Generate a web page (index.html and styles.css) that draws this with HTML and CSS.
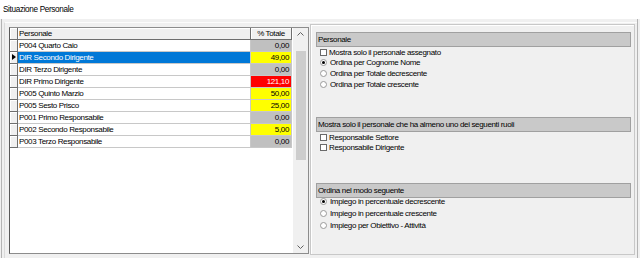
FILE: index.html
```html
<!DOCTYPE html>
<html>
<head>
<meta charset="utf-8">
<link rel="stylesheet" href="styles.css">
</head>
<body>
<div class="window">
  <div class="titlebar">Situazione Personale</div>
  <div class="client">
    <div class="frame">
      <div class="form">
        <div class="grid">
          <div class="table">
            <div class="row head">
              <div class="ind"></div><div class="name">Personale</div><div class="pct">% Totale</div>
            </div>
            <div class="row"><div class="ind"></div><div class="name">P004 Quarto Caio</div><div class="pct gray">0,00</div></div>
            <div class="row sel"><div class="ind"><span class="tri"></span></div><div class="name">DIR Secondo Dirigente</div><div class="pct yellow">49,00</div></div>
            <div class="row"><div class="ind"></div><div class="name">DIR Terzo Dirigente</div><div class="pct gray">0,00</div></div>
            <div class="row"><div class="ind"></div><div class="name">DIR Primo Dirigente</div><div class="pct red">121,10</div></div>
            <div class="row"><div class="ind"></div><div class="name">P005 Quinto Marzio</div><div class="pct yellow">50,00</div></div>
            <div class="row"><div class="ind"></div><div class="name">P005 Sesto Prisco</div><div class="pct yellow">25,00</div></div>
            <div class="row"><div class="ind"></div><div class="name">P001 Primo Responsabile</div><div class="pct gray">0,00</div></div>
            <div class="row"><div class="ind"></div><div class="name">P002 Secondo Responsabile</div><div class="pct yellow">5,00</div></div>
            <div class="row"><div class="ind"></div><div class="name">P003 Terzo Responsabile</div><div class="pct gray">0,00</div></div>
          </div>
          <div class="vscroll">
            <div class="sbtn"><svg width="7" height="4" viewBox="0 0 7 4"><polyline points="0.5,3.5 3.5,0.5 6.5,3.5" fill="none" stroke="#606060" stroke-width="1"/></svg></div>
            <div class="track"><div class="thumb"></div></div>
            <div class="sbtn"><svg width="7" height="4" viewBox="0 0 7 4"><polyline points="0.5,0.5 3.5,3.5 6.5,0.5" fill="none" stroke="#606060" stroke-width="1"/></svg></div>
          </div>
        </div>
        <div class="panel">
          <div class="group g1">
            <div class="bar">Personale</div>
            <div class="opt"><span class="chk"></span>Mostra solo il personale assegnato</div>
            <div class="opt"><span class="rad on"></span>Ordina per Cognome Nome</div>
            <div class="opt"><span class="rad"></span>Ordina per Totale decrescente</div>
            <div class="opt"><span class="rad"></span>Ordina per Totale crescente</div>
          </div>
          <div class="group g2">
            <div class="bar">Mostra solo il personale che ha almeno uno dei seguenti ruoli</div>
            <div class="opt"><span class="chk"></span>Responsabile Settore</div>
            <div class="opt"><span class="chk"></span>Responsabile Dirigente</div>
          </div>
          <div class="group g3">
            <div class="bar">Ordina nel modo seguente</div>
            <div class="opt"><span class="rad on"></span>Impiego in percentuale decrescente</div>
            <div class="opt"><span class="rad"></span>Impiego in percentuale crescente</div>
            <div class="opt"><span class="rad"></span>Impiego per Obiettivo - Attività</div>
          </div>
        </div>
      </div>
    </div>
  </div>
</div>
</body>
</html>
```

FILE: styles.css
```css
* { box-sizing: border-box; }
body {
  margin: 0;
  font-family: "Liberation Sans", Arial, sans-serif;
  font-size: 8px;
  letter-spacing: -0.35px;
  color: #000;
}
.window {
  width: 640px;
  height: 258px;
  overflow: hidden;
  background: #f0f0f0;
}
.titlebar {
  height: 19px;
  background: #fff;
  padding-left: 3px;
  line-height: 19px;
  font-size: 8.2px;
}
.client {
  height: 239px;
  padding: 0 2px 0 1px;
  display: flex;
}
.frame {
  flex: 1;
  border-left: 1px solid #b4b4b4;
  border-right: 1px solid #b4b4b4;
  padding-left: 2px;
  padding-top: 3px;
  display: flex;
}
.form {
  flex: 1;
  border-left: 1px solid #dadada;
  border-top: 1px solid #fcfcfc;
  padding: 1px 0 0 4px;
  display: flex;
  align-items: flex-start;
}
.grid {
  margin-top: 3px;
  width: 300px;
  height: 227px;
  border: 1px solid #8c8c8c;
  border-left-color: #5a5a5a;
  display: flex;
}
.table {
  width: 283px;
  height: 100%;
  background: #fff;
}
.row {
  display: flex;
  height: 12px;
  line-height: 11px;
}
.row > div {
  border-bottom: 1px solid #c8c8c8;
  border-right: 1px solid #c8c8c8;
  white-space: nowrap;
}
.row .ind {
  width: 8px;
  background: #f0f0f0;
  border-right-color: #6e6e6e;
  border-bottom-color: #6e6e6e;
  box-shadow: inset 1px 1px 0 #fff;
  position: relative;
}
.row .name {
  width: 233px;
  padding-left: 1px;
}
.row .pct {
  width: 41px;
  text-align: right;
  padding-right: 2px;
}
.head > div {
  background: #f0f0f0;
  border-right-color: #6e6e6e;
  border-bottom-color: #6e6e6e;
  box-shadow: inset 1px 1px 0 #fff;
}
.head .pct { text-align: center; padding-right: 0; }
.sel .name { background: #0078d7; color: #fff; }
.gray { background: #c0c0c0; }
.yellow { background: #ffff00; }
.red { background: #ff0000; color: #fff; }
.tri {
  position: absolute;
  left: 2px;
  top: 2px;
  width: 0;
  height: 0;
  border-top: 3.5px solid transparent;
  border-bottom: 3.5px solid transparent;
  border-left: 4px solid #000;
}
.vscroll {
  width: 15px;
  height: 100%;
  margin-left: auto;
  background: #f0f0f0;
  display: flex;
  flex-direction: column;
}
.sbtn {
  height: 12px;
  display: flex;
  align-items: center;
  justify-content: center;
}
.track { flex: 1; }
.thumb {
  margin: 11px 2px 0 3px;
  height: 109px;
  background: #cdcdcd;
}
.panel {
  margin-left: 1px;
  width: 325px;
  height: 231px;
  border: 1px solid #c8c8c8;
  box-shadow: inset 1px 1px 0 #fff;
  padding: 7px 3px 0 5px;
}
.group.g1 { height: 85px; }
.group.g2 { height: 66px; }
.bar {
  height: 15px;
  line-height: 13px;
  background: #c9c9c9;
  border: 1px solid #a0a0a0;
  padding-left: 1px;
  white-space: nowrap;
}
.opt {
  display: flex;
  align-items: center;
  height: 10.67px;
  white-space: nowrap;
}
.g2 .opt { height: 10px; }
.g3 .opt { height: 11.67px; }
.g3 .bar + .opt { margin-top: -2px; }
.chk {
  width: 7px;
  height: 7px;
  border: 1px solid #6a6a6a;
  background: #fff;
  margin: 0 2px 0 4px;
}
.rad {
  width: 7px;
  height: 7px;
  border: 1px solid #9a9a9a;
  border-radius: 50%;
  background: #fff;
  margin: 0 3px 0 4px;
  position: relative;
}
.rad.on::after {
  content: "";
  position: absolute;
  left: 1px;
  top: 1px;
  width: 3px;
  height: 3px;
  border-radius: 50%;
  background: #000;
}
```
